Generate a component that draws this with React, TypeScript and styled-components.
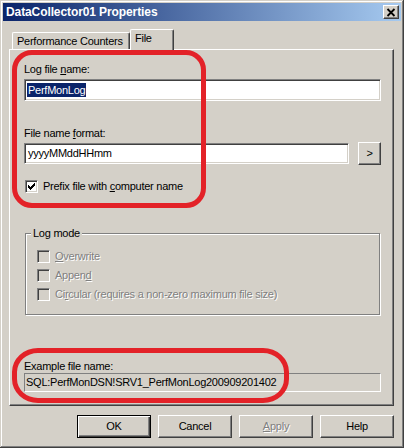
import React from "react";
import styled, { createGlobalStyle, css } from "styled-components";

const FONT = `"Liberation Sans", Arial, sans-serif`;
const FACE = "#D4D0C8";
const SHADOW = "#808080";
const DARK = "#404040";
const RED = "#E32228";

const Global = createGlobalStyle`
  html, body { margin: 0; padding: 0; background: ${FACE}; }
  * { box-sizing: border-box; }
`;

const disabledText = css`
  color: ${SHADOW};
  text-shadow: 1px 1px 0 #fff;
`;

const Window = styled.div`
  position: relative;
  width: 404px;
  height: 448px;
  background: ${FACE};
  padding: 3px 3px 3px 3px;
  display: flex;
  flex-direction: column;
  font-family: ${FONT};
  font-size: 11px;
  line-height: 13px;
  letter-spacing: -0.25px;
  color: #000;
  box-shadow: inset -1px -1px ${DARK}, inset 1px 1px ${FACE},
    inset -2px -2px ${SHADOW}, inset 2px 2px #fff;
`;

const TitleBar = styled.div`
  height: 18px;
  display: flex;
  align-items: center;
  padding: 0 2px 0 3px;
  background: linear-gradient(to right, #0a246a, #a6caf0);
`;

const TitleText = styled.div`
  flex: 1;
  color: #fff;
  font-weight: bold;
  font-size: 12px;
  letter-spacing: -0.1px;
`;

const CloseButton = styled.div`
  width: 16px;
  height: 14px;
  background: ${FACE};
  border: 1px solid;
  border-color: #fff ${DARK} ${DARK} #fff;
  box-shadow: inset -1px -1px ${SHADOW};
  display: flex;
  align-items: center;
  justify-content: center;
`;

const Body = styled.div`
  flex: 1;
  display: flex;
  flex-direction: column;
  padding: 8px 7px 0 6px;
`;

const TabRow = styled.div`
  height: 20px;
  display: flex;
  align-items: flex-end;
  padding-left: 3px;
`;

const Tab = styled.div<{ $active?: boolean; $w: number }>`
  width: ${(p) => p.$w}px;
  height: ${(p) => (p.$active ? 21 : 17)}px;
  margin-bottom: ${(p) => (p.$active ? -1 : 0)}px;
  position: relative;
  z-index: ${(p) => (p.$active ? 1 : 0)};
  background: ${FACE};
  border-top: 1px solid #fff;
  border-left: 1px solid #fff;
  border-right: 1px solid ${DARK};
  border-radius: 2px 2px 0 0;
  box-shadow: inset -1px 0 ${SHADOW};
  padding: 2px 0 0 4px;
  white-space: nowrap;
`;

const Panel = styled.div`
  height: 357px;
  border: 1px solid;
  border-color: #fff ${DARK} ${DARK} #fff;
  box-shadow: inset -1px -1px ${SHADOW};
  padding: 13px 12px 0 14px;
  display: flex;
  flex-direction: column;
`;

const Label = styled.div<{ $mt?: number }>`
  margin-top: ${(p) => p.$mt ?? 0}px;
  height: 13px;
  white-space: nowrap;
`;

const Field = styled.div<{ $mt?: number }>`
  margin-top: ${(p) => p.$mt ?? 0}px;
  height: 22px;
  background: #fff;
  border: 1px solid;
  border-color: ${SHADOW} #fff #fff ${SHADOW};
  box-shadow: inset 1px 1px ${DARK}, inset -1px -1px ${FACE};
  padding: 3px 0 0 2px;
  display: flex;
  align-items: flex-start;
  white-space: nowrap;
`;

const GrowField = styled(Field)`
  flex: 1;
  height: 21px;
  padding-top: 3px;
  padding-left: 3px;
`;

const Selected = styled.span`
  background: #0a246a;
  color: #fff;
  padding: 0 1px;
  line-height: 14px;
`;

const FormatRow = styled.div`
  margin-top: 2px;
  height: 23px;
  display: flex;
  align-items: center;
  gap: 9px;
`;

const Button = styled.div<{ $default?: boolean; $disabled?: boolean; $w: number }>`
  width: ${(p) => p.$w}px;
  height: 23px;
  background: ${FACE};
  display: flex;
  align-items: center;
  justify-content: center;
  white-space: nowrap;
  ${(p) =>
    p.$default
      ? css`
          border: 1px solid #000;
          box-shadow: inset 1px 1px #fff, inset -1px -1px ${DARK},
            inset -2px -2px ${SHADOW};
        `
      : css`
          border: 1px solid;
          border-color: #fff ${DARK} ${DARK} #fff;
          box-shadow: inset -1px -1px ${SHADOW}, inset 1px 1px ${FACE};
        `}
  ${(p) => p.$disabled && disabledText}
`;

const CheckRow = styled.div<{ $mt?: number; $ml?: number; $disabled?: boolean }>`
  margin-top: ${(p) => p.$mt ?? 0}px;
  margin-left: ${(p) => p.$ml ?? 0}px;
  height: 13px;
  display: flex;
  align-items: center;
  gap: 5px;
  white-space: nowrap;
  ${(p) => p.$disabled && disabledText}
`;

const Box = styled.span<{ $disabled?: boolean }>`
  width: 13px;
  height: 13px;
  flex: none;
  background: ${(p) => (p.$disabled ? FACE : "#fff")};
  border: 1px solid;
  border-color: ${SHADOW} #fff #fff ${SHADOW};
  box-shadow: inset 1px 1px ${DARK}, inset -1px -1px ${FACE};
  display: flex;
  align-items: center;
  justify-content: center;
`;

const Group = styled.div`
  position: relative;
  margin: 40px 1px 0 1px;
  height: 82px;
  border: 1px solid ${SHADOW};
  box-shadow: inset 1px 1px #fff, 1px 1px #fff;
  padding: 16px 0 0 11px;
  display: flex;
  flex-direction: column;
  gap: 6px;
`;

const Legend = styled.span`
  position: absolute;
  top: -7px;
  left: 5px;
  padding: 0 2px;
  background: ${FACE};
  line-height: 13px;
`;

const ReadOnly = styled.div`
  height: 19px;
  border: 1px solid;
  border-color: ${SHADOW} #fff #fff ${SHADOW};
  padding: 2px 0 0 1px;
  white-space: nowrap;
`;

const ButtonRow = styled.div`
  margin-top: 9px;
  display: flex;
  justify-content: flex-end;
  gap: 7px;
`;

const U = styled.span`
  text-decoration: underline;
  text-underline-offset: 1px;
`;

const RedBox = styled.div`
  position: absolute;
  left: 12px;
  top: 50px;
  width: 194px;
  height: 158px;
  border: 5px solid ${RED};
  border-radius: 20px;
  pointer-events: none;
`;

const RedPill = styled.div`
  position: absolute;
  left: 12px;
  top: 348px;
  width: 277px;
  height: 55px;
  border: 5px solid ${RED};
  border-radius: 26px / 24px;
  pointer-events: none;
`;

const CheckMark = () => (
  <svg width="7" height="7" viewBox="0 0 7 7" shapeRendering="crispEdges">
    {[2, 3, 4, 3, 2, 1, 0].map((y, x) => (
      <rect key={x} x={x} y={y} width="1" height="3" fill="#000" />
    ))}
  </svg>
);

const CloseGlyph = () => (
  <svg width="10" height="9" viewBox="0 0 10 9">
    <path d="M1.5 1 L8.5 8 M8.5 1 L1.5 8" stroke="#000" strokeWidth="1.8" />
  </svg>
);

export default function App() {
  return (
    <>
      <Global />
      <Window>
        <TitleBar>
          <TitleText>DataCollector01 Properties</TitleText>
          <CloseButton>
            <CloseGlyph />
          </CloseButton>
        </TitleBar>
        <Body>
          <TabRow>
            <Tab $w={118}>Performance Counters</Tab>
            <Tab $w={44} $active>
              File
            </Tab>
          </TabRow>
          <Panel>
            <Label>
              Log file <U>n</U>ame:
            </Label>
            <Field $mt={3}>
              <Selected>PerfMonLog</Selected>
            </Field>
            <Label $mt={26}>
              File name <U>f</U>ormat:
            </Label>
            <FormatRow>
              <GrowField>yyyyMMddHHmm</GrowField>
              <Button $w={23}>&gt;</Button>
            </FormatRow>
            <CheckRow $mt={15} $ml={1}>
              <Box>
                <CheckMark />
              </Box>
              <span>
                Prefix file with <U>c</U>omputer name
              </span>
            </CheckRow>
            <Group>
              <Legend>Log mode</Legend>
              <CheckRow $disabled>
                <Box $disabled />
                <span>
                  <U>O</U>verwrite
                </span>
              </CheckRow>
              <CheckRow $disabled>
                <Box $disabled />
                <span>
                  Appen<U>d</U>
                </span>
              </CheckRow>
              <CheckRow $disabled>
                <Box $disabled />
                <span>
                  Ci<U>r</U>cular (requires a non-zero maximum file size)
                </span>
              </CheckRow>
            </Group>
            <Label $mt={45}>Example file name:</Label>
            <ReadOnly>SQL:PerfMonDSN!SRV1_PerfMonLog200909201402</ReadOnly>
          </Panel>
          <ButtonRow>
            <Button $w={74} $default>
              OK
            </Button>
            <Button $w={74}>Cancel</Button>
            <Button $w={74} $disabled>
              <span>
                <U>A</U>pply
              </span>
            </Button>
            <Button $w={74}>Help</Button>
          </ButtonRow>
        </Body>
        <RedBox />
        <RedPill />
      </Window>
    </>
  );
}
